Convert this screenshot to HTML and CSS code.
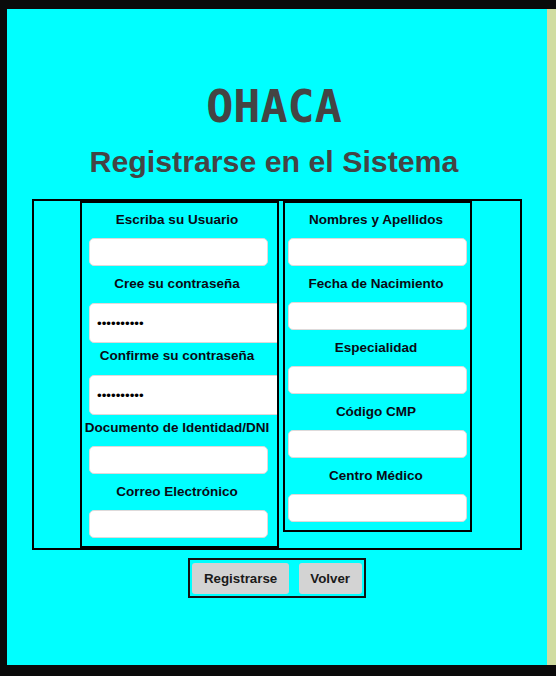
FILE: index.html
```html
<!DOCTYPE html>
<html lang="es">
<head>
<meta charset="utf-8">
<title>OHACA - Registrarse</title>
<link rel="stylesheet" href="styles.css">
</head>
<body>
<div class="frame">
  <main class="panel">
    <header class="header">
      <h1 class="brand">OHACA</h1>
      <h2 class="subtitle">Registrarse en el Sistema</h2>
    </header>
    <form class="form-box">
      <div class="col col-left">
        <label class="lbl">Escriba su Usuario</label>
        <input class="field" type="text">
        <label class="lbl">Cree su contraseña</label>
        <input class="field pw" type="password" value="1234567890">
        <label class="lbl">Confirme su contraseña</label>
        <input class="field pw" type="password" value="1234567890">
        <label class="lbl">Documento de Identidad/DNI</label>
        <input class="field" type="text">
        <label class="lbl">Correo Electrónico</label>
        <input class="field last" type="text">
      </div>
      <div class="col col-right">
        <label class="lbl">Nombres y Apellidos</label>
        <input class="field" type="text">
        <label class="lbl">Fecha de Nacimiento</label>
        <input class="field" type="text">
        <label class="lbl">Especialidad</label>
        <input class="field" type="text">
        <label class="lbl">Código CMP</label>
        <input class="field" type="text">
        <label class="lbl">Centro Médico</label>
        <input class="field last" type="text">
      </div>
    </form>
    <div class="actions">
      <button class="btn" type="button">Registrarse</button>
      <button class="btn" type="button">Volver</button>
    </div>
  </main>
  <div class="strip"></div>
</div>
</body>
</html>
```

FILE: styles.css
```css
html, body {
  margin: 0;
  padding: 0;
}
body {
  background: #0a0a0a;
  padding: 9px 0 0 7px;
  height: 676px;
  box-sizing: border-box;
  overflow: hidden;
  font-family: "Liberation Sans", Arial, sans-serif;
}
.frame {
  display: flex;
  height: 656px;
}
.panel {
  width: 540px;
  height: 656px;
  background: #00ffff;
  display: flex;
  flex-direction: column;
  align-items: center;
  padding-top: 72px;
  box-sizing: border-box;
}
.strip {
  width: 9px;
  height: 656px;
  background: #d0dca0;
}
.header {
  text-align: center;
  padding-right: 6px;
}
.brand {
  margin: 0;
  font-family: "DejaVu Sans Mono", "Liberation Mono", monospace;
  font-weight: bold;
  font-size: 45px;
  line-height: 52px;
  color: #444444;
}
.subtitle {
  margin: 12px 0 0;
  font-family: "Liberation Sans", Arial, sans-serif;
  font-weight: bold;
  font-size: 30.3px;
  line-height: 34px;
  color: #444444;
}
.form-box {
  margin: 20px 0 0;
  width: 490px;
  box-sizing: border-box;
  border: 2px solid #000;
  display: flex;
  align-items: flex-start;
  gap: 4px;
  padding: 0 0 0 46px;
}
.col {
  border: 2px solid #000;
  box-sizing: border-box;
  padding-top: 9px;
  overflow: hidden;
}
.col-left {
  width: 199px;
}
.col-right {
  width: 189px;
}
.lbl {
  display: block;
  text-align: center;
  font-weight: bold;
  font-size: 13.5px;
  line-height: 16px;
  color: #0a0a14;
  white-space: nowrap;
}
.col-left .lbl {
  padding-right: 5px;
}
.col-right .lbl {
  padding-right: 3px;
}
.field {
  display: block;
  box-sizing: border-box;
  width: 179px;
  height: 28px;
  margin: 10px 0 10px 7px;
  padding: 0 7px;
  background: #ffffff;
  border: 1px solid #dedada;
  border-radius: 5px;
  font-family: "Liberation Sans", Arial, sans-serif;
  font-size: 13.33px;
  color: #000;
  outline: none;
}
.col-right .field {
  margin-left: 3px;
}
.field.pw {
  width: 200px;
  height: 40px;
  margin-top: 11px;
  margin-bottom: 5px;
}
.field.last {
  margin-bottom: 8px;
}
.actions {
  margin-top: 8px;
  border: 2px solid #111;
  padding: 3px 2px 2px 2px;
  display: flex;
  gap: 10px;
}
.btn {
  height: 31px;
  padding: 0 11.5px;
  border: none;
  border-radius: 3px;
  background: #d3d3d3;
  font-family: "Liberation Sans", Arial, sans-serif;
  font-weight: bold;
  font-size: 13.33px;
  color: #1a1a1a;
}
```
